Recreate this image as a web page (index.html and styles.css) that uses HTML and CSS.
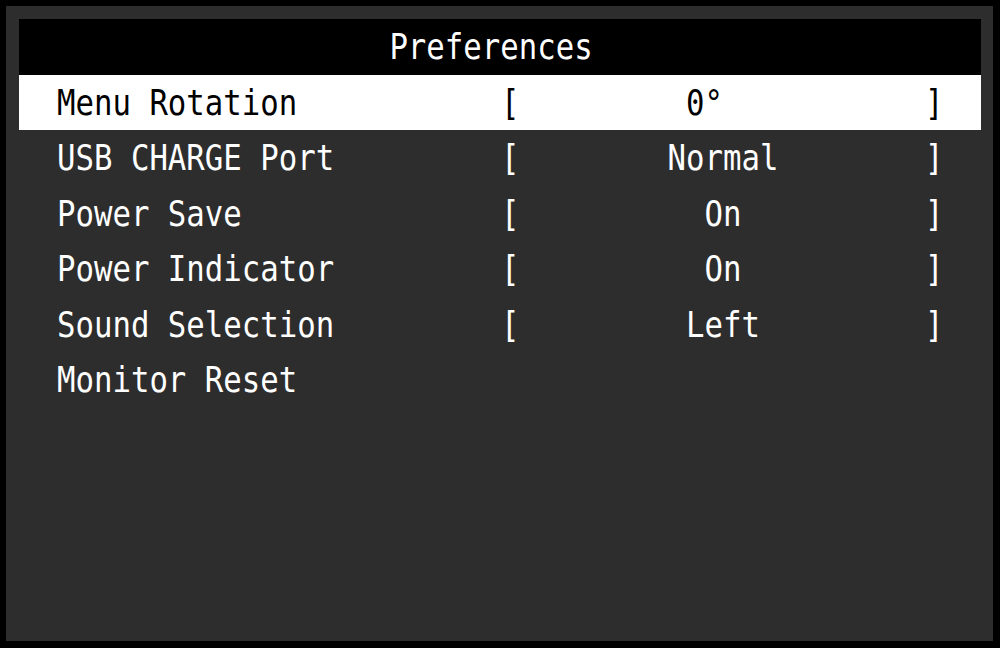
FILE: index.html
```html
<!DOCTYPE html>
<html lang="en">
<head>
    <meta charset="UTF-8">
    <title>Preferences</title>
    <link rel="stylesheet" href="styles.css">
</head>
<body>
    <div class="osd">
        <div class="title"><span>Preferences</span></div>
        <div class="row active">
            <span class="label">Menu Rotation</span>
            <span class="br">[</span>
            <span class="value">0°  </span>
            <span class="br">]</span>
        </div>
        <div class="row">
            <span class="label">USB CHARGE Port</span>
            <span class="br">[</span>
            <span class="value">Normal</span>
            <span class="br">]</span>
        </div>
        <div class="row">
            <span class="label">Power Save</span>
            <span class="br">[</span>
            <span class="value">On</span>
            <span class="br">]</span>
        </div>
        <div class="row">
            <span class="label">Power Indicator</span>
            <span class="br">[</span>
            <span class="value">On</span>
            <span class="br">]</span>
        </div>
        <div class="row">
            <span class="label">Sound Selection</span>
            <span class="br">[</span>
            <span class="value">Left</span>
            <span class="br">]</span>
        </div>
        <div class="row">
            <span class="label">Monitor Reset</span>
        </div>
    </div>
</body>
</html>
```
FILE: styles.css
```css
body {
    margin: 0;
    background: #000;
}
.osd {
    margin: 6px;
    width: 987px;
    height: 635px;
    box-sizing: border-box;
    padding: 13px 12px 13px 13px;
    background: #2d2d2d;
    color: #fff;
    font-family: "DejaVu Sans Mono", monospace;
    font-size: 30.7px;
}
.title {
    height: 55.5px;
    background: #000;
    display: flex;
    align-items: center;
    justify-content: center;
    padding-right: 18px;
}
.title span,
.row span {
    display: inline-block;
    transform: scaleY(1.16);
}
.row {
    height: 55.5px;
    display: grid;
    grid-template-columns: 444px 20px 404px 20px;
    align-items: center;
    padding-left: 38px;
    white-space: pre;
}
.row.active {
    background: #fff;
    color: #000;
}
.value {
    text-align: center;
}
```
